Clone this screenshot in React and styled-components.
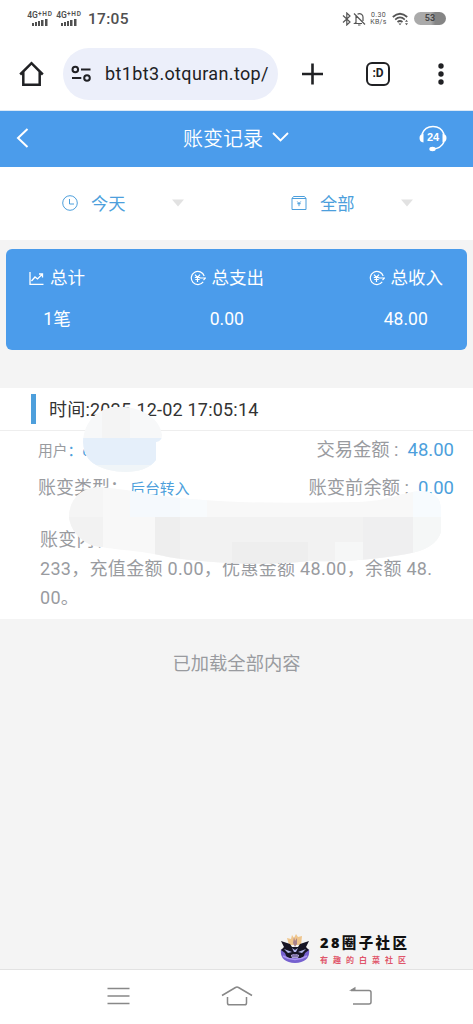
import React from "react"
import styled, { createGlobalStyle } from 'styled-components'


const colors = {
	primary: '#4b9ceb',
	link: '#4d9fdc',
	grey: '#999b9f',
	background: '#f4f4f4',
	dark: '#202124',
}


const GlobalStyle = createGlobalStyle`
	* {
		box-sizing: border-box;
	}
	body {
		margin: 0;
		background-color: #fff;
		font-family: Roboto, 'Noto Sans CJK SC', sans-serif;
	}
	svg {
		display: block;
		flex: none;
	}
`

const Page = styled.div`
	display: flex;
	flex-direction: column;
	width: 473px;
	height: 1024px;
	overflow: hidden;
	background-color: ${colors.background};
`

/* ---------- phone status bar ---------- */

const StatusBar = styled.div`
	display: flex;
	align-items: center;
	height: 37px;
	padding: 0 27px;
	background-color: #fff;
	color: #505050;
`

const Signal = styled.div`
	display: flex;
	flex-direction: column;
	align-items: center;
	width: 26px;
	margin-right: 3px;
	font-size: 8.5px;
	line-height: 8px;
	font-weight: 600;
	white-space: nowrap;

	sup {
		font-size: 6.5px;
		line-height: 0;
		vertical-align: 2px;
		letter-spacing: 0.8px;
	}
`

const Clock = styled.div`
	margin-left: 3px;
	font-size: 15.5px;
	font-weight: 500;
	letter-spacing: 0.3px;
`

const StatusIcons = styled.div`
	display: flex;
	align-items: center;
	margin-left: auto;
`

const Speed = styled.div`
	width: 17px;
	margin: 0 5px 0 4px;
	font-size: 7px;
	line-height: 7px;
	font-weight: 400;
	letter-spacing: 0.3px;
	text-align: center;
	white-space: nowrap;
`

const Battery = styled.div`
	width: 32px;
	height: 13px;
	margin-left: 5px;
	border-radius: 7px;
	background: linear-gradient(90deg, #aaa 0 53%, #858585 66% 100%);
	color: #444;
	font-size: 9px;
	line-height: 13px;
	font-weight: 600;
	text-align: center;
`

/* ---------- browser bar ---------- */

const BrowserBar = styled.div`
	display: flex;
	align-items: center;
	height: 74px;
	padding: 0 19px;
	border-bottom: 1px solid #dbe9f6;
	background-color: #fff;
	color: ${colors.dark};
`

const AddressBar = styled.div`
	display: flex;
	align-items: center;
	width: 215px;
	height: 52px;
	margin: 0 23px 0 19px;
	padding-left: 8px;
	border-radius: 26px;
	background-color: #eceffa;
	font-size: 18px;
	white-space: nowrap;
`

const Url = styled.span`
	margin-left: 14px;
	letter-spacing: 0.36px;
`

const TabSwitch = styled.div`
	width: 24px;
	height: 24px;
	margin: 0 48px 0 42px;
	border: 2.5px solid ${colors.dark};
	border-radius: 6px;
	font-size: 12px;
	line-height: 19px;
	font-weight: 700;
	text-align: center;
`

/* ---------- page header ---------- */

const Header = styled.header`
	display: flex;
	align-items: center;
	justify-content: space-between;
	height: 56px;
	padding: 0 26px 2px 16px;
	background-color: ${colors.primary};
	color: #fff;
`

const Title = styled.div`
	display: flex;
	align-items: center;
	gap: 9px;
	margin: 0 0 2px 24px;
	font-size: 20px;
	font-weight: 350;
`

const Filters = styled.div`
	display: flex;
	height: 73px;
	padding: 0 0 2px 62px;
	background-color: #fff;
`

const Filter = styled.div`
	display: flex;
	flex: none;
	align-items: center;
	width: 229px;
	color: ${colors.link};
	font-size: 17.3px;

	span {
		width: 81px;
		margin: 0 0 1px 13px;
	}
`

/* ---------- summary ---------- */

const Summary = styled.div`
	display: flex;
	justify-content: space-between;
	height: 101px;
	margin: 9px 6px 38px;
	padding: 15px 24px 15px 23px;
	border-radius: 6px;
	background-color: ${colors.primary};
	color: #fff;
`

const Total = styled.div`
	display: flex;
	flex-direction: column;
	align-items: center;
	font-size: 17.5px;
	line-height: 28px;
`

const TotalLabel = styled.div`
	display: flex;
	align-items: center;
	gap: 6px;
	height: 28px;
	margin-bottom: 13px;
`

/* ---------- record ---------- */

const Record = styled.section`
	position: relative;
	height: 231px;
	background-color: #fff;
	color: ${colors.grey};
	font-size: 18px;
`

const RecordTime = styled.div`
	display: flex;
	align-items: center;
	height: 43px;
	padding: 0 0 2px 31px;
	border-bottom: 1px solid #eee;
	color: #333;
	font-size: 18px;
	letter-spacing: 0.2px;

	&::before {
		content: '';
		width: 5px;
		height: 30px;
		margin: 1px 13px 0 0;
		background-color: ${colors.link};
	}
`

const RecordRow = styled.div`
	display: flex;
	align-items: center;
	justify-content: space-between;
	height: 38px;
	padding: 0 19px 4px 38px;
	white-space: pre;
`

const Small = styled.span`
	margin-top: 2px;
	font-size: 14.8px;
`

const Value = styled.span`
	margin-left: ${props => props.$gap || 0}px;
	color: ${colors.link};
	font-size: ${props => props.$small ? 14.9 : 18.5}px;
`

const Amount = styled.span`
	font-size: 18.3px;
`

const Content = styled.p`
	margin: 18px 0 0;
	padding-left: 40px;
	font-size: 18px;
	line-height: 29px;
	letter-spacing: 0.3px;
	white-space: pre;
`

const Smudge = styled.svg`
	position: absolute;
	left: ${props => props.$left}px;
	top: ${props => props.$top}px;
`

const Loaded = styled.div`
	flex: 1;
	padding-top: 31px;
	color: ${colors.grey};
	font-size: 18.3px;
	line-height: 27px;
	text-align: center;
`

/* ---------- bottom ---------- */

const Brand = styled.div`
	display: flex;
	align-items: center;
	height: 42px;
	padding: 0 0 0 280px;
`

const BrandText = styled.div`
	margin: 4px 0 0 10px;
	color: #111;
	font-size: 14.5px;
	line-height: 19px;
	font-weight: 900;
	letter-spacing: 2.4px;
	font-family: 'Noto Sans', 'Noto Sans CJK SC', sans-serif;
	white-space: nowrap;

	small {
		display: block;
		color: #e0566b;
		font-size: 8px;
		line-height: 15px;
		font-weight: 700;
		letter-spacing: 5px;
	}
`

const NavBar = styled.nav`
	display: flex;
	align-items: center;
	justify-content: space-between;
	height: 55px;
	padding: 0 101px 2px 107px;
	border-top: 1px solid #e2e2e2;
	background-color: #fff;
`

const HomeIcon = styled.svg`
	margin-right: 6px;
`


function SignalBars() {
	return (
		<Signal>
			<div>4G<sup>+HD</sup></div>
			<svg width="16" height="7" fill="#505050">
				<rect x="0" y="4" width="2" height="3" />
				<rect x="3" y="3" width="2" height="4" />
				<rect x="6" y="2" width="2" height="5" />
				<rect x="9" y="1" width="2.5" height="6" />
				<rect x="13" y="0" width="2.5" height="7" />
			</svg>
		</Signal>
	)
}

function YenCircle() {
	return (
		<svg width="16" height="16" viewBox="0 0 16 16" fill="none" stroke="#fff" strokeWidth="1.2">
			<path d="M13.2 11.9A6.6 6.6 0 1 1 14.2 6M9.5 8H15.5L13.5 10.2" />
			<path d="M5 4.7L7.5 7.5L10 4.7M4.8 7.5H10.2M5.3 9.5H9.7M7.5 7.5V12" />
		</svg>
	)
}

function Caret() {
	return (
		<svg width="12" height="8" viewBox="0 0 12 8"><path d="M0 0.5H12L6 7.5Z" fill="#e2e2e2" /></svg>
	)
}

function BrandLogo() {
	return (
		<svg width="30" height="32" viewBox="0 0 30 32">
			<path d="M9 13L7 6L11 7L12 3L14 6L16 2L18 5L22 4L21 13Z" fill="#efc58c" />
			<path d="M1 17Q-1 30 15 31Q31 30 29 17L24 21H6Z" fill="#7560cf" />
			<path d="M1 9L10 12L12 15H18L20 12L29 9L26 15L29 18L25 21L23 26H7L5 21L1 18L4 15Z" fill="#171525" />
			<path d="M14 5L15 9L17 6L17 12L15 15L13 11Z" fill="#a9828c" />
			<path d="M4 17L12 20L8 21ZM26 17L18 20L22 21ZM12 16L15 18L18 16L16 20H14Z" fill="#b5b9ed" />
			<path d="M11 23Q15 21 19 23L18 26H12Z" fill="#cfc8f5" />
			<path d="M3 24Q15 31 27 24" fill="none" stroke="#aa96ef" strokeWidth="1.5" />
			<path d="M13 22.5V25.5M15 22V25.5M17 22.5V25.5" stroke="#38245e" />
		</svg>
	)
}


export default function App() {
	return (
		<Page>
			<GlobalStyle />
			<StatusBar>
				<SignalBars />
				<SignalBars />
				<Clock>17:05</Clock>
				<StatusIcons>
					<svg width="24" height="14" viewBox="0 0 24 14" fill="none" stroke="#555" strokeWidth="1.2">
						<path d="M1 3.5L8 10L4.8 13V1L8 4L1 10.5" />
						<path d="M12 1.5L23 12.5M14 4V10.5L12.8 11.5H20M15.5 2.3Q17.5 1 19.5 2.3Q21 3.5 21 5V9M16 13H18.5" />
					</svg>
					<Speed>0.30<br />KB/s</Speed>
					<svg width="17" height="14" viewBox="0 0 17 14" fill="none" stroke="#555" strokeWidth="1.7">
						<path d="M0.8 5Q8 -1.5 15.2 5M3.2 7.6Q8 3.3 12.8 7.6M5.5 10Q8 8 10.5 10" />
						<path d="M6.5 11.5H9.5L8 13.2Z" fill="#555" stroke="none" />
						<path d="M13 9.7L14.5 7.8L16 9.7ZM13 11.2H16L14.5 13.2Z" fill="#555" stroke="none" />
					</svg>
					<Battery>53</Battery>
				</StatusIcons>
			</StatusBar>

			<BrowserBar>
				<svg width="25" height="26" viewBox="0 0 25 26" fill="none" stroke={colors.dark} strokeWidth="2.5">
					<path d="M1.2 13.5L12.5 2.2L23.8 13.5M4.3 11V23.8H20.7V11" />
				</svg>
				<AddressBar>
					<svg width="20" height="18" viewBox="0 0 20 18" fill="none" stroke={colors.dark} strokeWidth="2">
						<circle cx="4.3" cy="4.5" r="2.8" />
						<circle cx="16" cy="13" r="2.8" />
						<path d="M10 4.5H19.5M1 13H10.3" />
					</svg>
					<Url>bt1bt3.otquran.top/</Url>
				</AddressBar>
				<svg width="23" height="22" viewBox="0 0 23 22" stroke={colors.dark} strokeWidth="2.6">
					<path d="M1 11H22M11.5 0.5V21.5" />
				</svg>
				<TabSwitch>:D</TabSwitch>
				<svg width="6" height="22" viewBox="0 0 6 22" fill={colors.dark}>
					<circle cx="3" cy="3" r="2.7" />
					<circle cx="3" cy="11" r="2.7" />
					<circle cx="3" cy="19" r="2.7" />
				</svg>
			</BrowserBar>

			<Header>
				<svg width="13" height="20" viewBox="0 0 13 20" fill="none" stroke="#fff" strokeWidth="2">
					<path d="M11.5 1L2 10L11.5 19" />
				</svg>
				<Title>
					账变记录
					<svg width="17" height="10" viewBox="0 0 17 10" fill="none" stroke="#fff" strokeWidth="1.8">
						<path d="M1 1L8.5 8.5L16 1" />
					</svg>
				</Title>
				<svg width="28" height="28" viewBox="0 0 28 28" fill="none" stroke="#fff" strokeWidth="1.5">
					<path d="M3 10A11.8 11.8 0 0 1 25 10M25 18Q22 24.5 14 25" />
					<path d="M4.5 9.5V18.5Q0.5 18 0.5 14T4.5 9.5ZM23.5 9.5V18.5Q27.5 18 27.5 14T23.5 9.5Z" fill="#fff" stroke="none" />
					<ellipse cx="13.5" cy="25" rx="3.2" ry="2.2" fill="#fff" stroke="none" />
					<text x="14" y="17.3" fill="#fff" stroke="none" fontSize="11" fontWeight="700" fontFamily="Liberation Sans, sans-serif" textAnchor="middle">24</text>
				</svg>
			</Header>

			<Filters>
				<Filter>
					<svg width="16" height="16" viewBox="0 0 16 16" fill="none" stroke={colors.link} strokeWidth="1">
						<circle cx="8" cy="8" r="7.3" />
						<path d="M7.5 4V9H12" />
					</svg>
					<span>今天</span>
					<Caret />
				</Filter>
				<Filter>
					<svg width="16" height="16" viewBox="0 0 16 16" fill="none" stroke={colors.link} strokeWidth="1">
						<path d="M1 3.5L2.5 1.5H13.5L15 3.5V14.5H1V3.5H15" />
						<path d="M6.3 6.5L8 8.5L9.7 6.5M6.3 8.7H9.7M8 8V11.2" />
					</svg>
					<span>全部</span>
					<Caret />
				</Filter>
			</Filters>

			<Summary>
				<Total>
					<TotalLabel>
						<svg width="15" height="15" viewBox="0 0 15 15" fill="none" stroke="#fff" strokeWidth="1.3">
							<path d="M1 1V13.3H14.5M2.5 10L6 6L8.5 8L13 3.5M10 3H13.5V6.5" />
						</svg>
						总计
					</TotalLabel>
					1笔
				</Total>
				<Total>
					<TotalLabel><YenCircle />总支出</TotalLabel>
					0.00
				</Total>
				<Total>
					<TotalLabel><YenCircle />总收入</TotalLabel>
					48.00
				</Total>
			</Summary>

			<Record>
				<RecordTime>时间:2025-12-02 17:05:14</RecordTime>
				<RecordRow>
					<Small>用户<Value $small>：c</Value></Small>
					<Amount>交易金额 :<Value $gap={9}>48.00</Value></Amount>
				</RecordRow>
				<RecordRow>
					<span>账变类型：<Value $gap={2} $small>后台转入</Value></span>
					<Amount>账变前余额 :<Value $gap={9}>0.00</Value></Amount>
				</RecordRow>
				<Content>{'账变内容：\n233，充值金额 0.00，优惠金额 48.00，余额 48.\n00。'}</Content>

				<Smudge $left={82} $top={19} width="82" height="66" viewBox="82 407 82 66">
					<clipPath id="nameMask">
						<path d="M83 442C84 421 98 408 117 407C141 406 160 418 162 435Q162 441 156 442V460C145 476 111 474 96 465Q84 459 83 442Z" />
					</clipPath>
					<g clipPath="url(#nameMask)">
						<rect x="82" y="407" width="82" height="66" fill="#f7f8f9" />
						<rect x="102" y="407" width="28" height="31" fill="#f4f4f4" />
						<rect x="82" y="438" width="82" height="27" fill="#e5effa" />
						<rect x="82" y="465" width="82" height="8" fill="#f0f5f8" />
					</g>
				</Smudge>
				<Smudge $left={69} $top={99} width="372" height="78" viewBox="69 487 372 78">
					<clipPath id="detailMask">
						<path d="M69 518C69 498 82 488 99 487C129 489 145 495 190 499C251 504 305 503 357 502C391 501 396 493 421 491Q441 492 441 510V532Q436 549 407 554C373 560 341 562 310 561C259 566 207 563 168 557C141 550 110 550 91 545Q72 536 69 518Z" />
					</clipPath>
					<g clipPath="url(#detailMask)">
						<rect x="69" y="487" width="372" height="78" fill="#f8f8f8" />
						<rect x="69" y="487" width="34" height="30" fill="#f5f5f5" />
						<rect x="69" y="517" width="34" height="30" fill="#f2f2f2" />
						<rect x="130" y="487" width="50" height="30" fill="#f5f9fd" />
						<rect x="180" y="495" width="27" height="22" fill="#f8fbfd" />
						<rect x="155" y="517" width="25" height="48" fill="#eeeeee" />
						<rect x="180" y="517" width="183" height="48" fill="#f2f2f2" />
						<rect x="232" y="542" width="76" height="23" fill="#eeeeee" />
						<rect x="335" y="542" width="28" height="23" fill="#f6f7f7" />
						<rect x="363" y="517" width="50" height="45" fill="#efeff0" />
						<rect x="413" y="487" width="28" height="30" fill="#f7fbfe" />
						<rect x="413" y="517" width="28" height="45" fill="#f5f7f7" />
					</g>
				</Smudge>
			</Record>

			<Loaded>已加载全部内容</Loaded>

			<Brand>
				<BrandLogo />
				<BrandText>
					28圈子社区
					<small>有趣的白菜社区</small>
				</BrandText>
			</Brand>

			<NavBar>
				<svg width="23" height="18" viewBox="0 0 23 18" stroke="#888" strokeWidth="1.5">
					<path d="M0.5 1.5H22.5M0.5 9H22.5M0.5 16.5H22.5" />
				</svg>
				<HomeIcon width="32" height="20" viewBox="0 0 32 20" fill="none" stroke="#888" strokeWidth="1.5">
					<path d="M1 9.5L14.5 1.5Q16 0.7 17.5 1.5L31 9.5M6.5 11V17Q6.5 18.8 8.3 18.8H23.7Q25.5 18.8 25.5 17V11" />
				</HomeIcon>
				<svg width="23" height="20" viewBox="0 0 23 20" fill="none" stroke="#888" strokeWidth="1.5">
					<path d="M2 4.5H20Q22 4.5 22 6.5V16Q22 18 20 18H4" />
					<path d="M0 4.8L6.5 0.8V4.8Z" fill="#888" stroke="none" />
				</svg>
			</NavBar>
		</Page>
	)
}
